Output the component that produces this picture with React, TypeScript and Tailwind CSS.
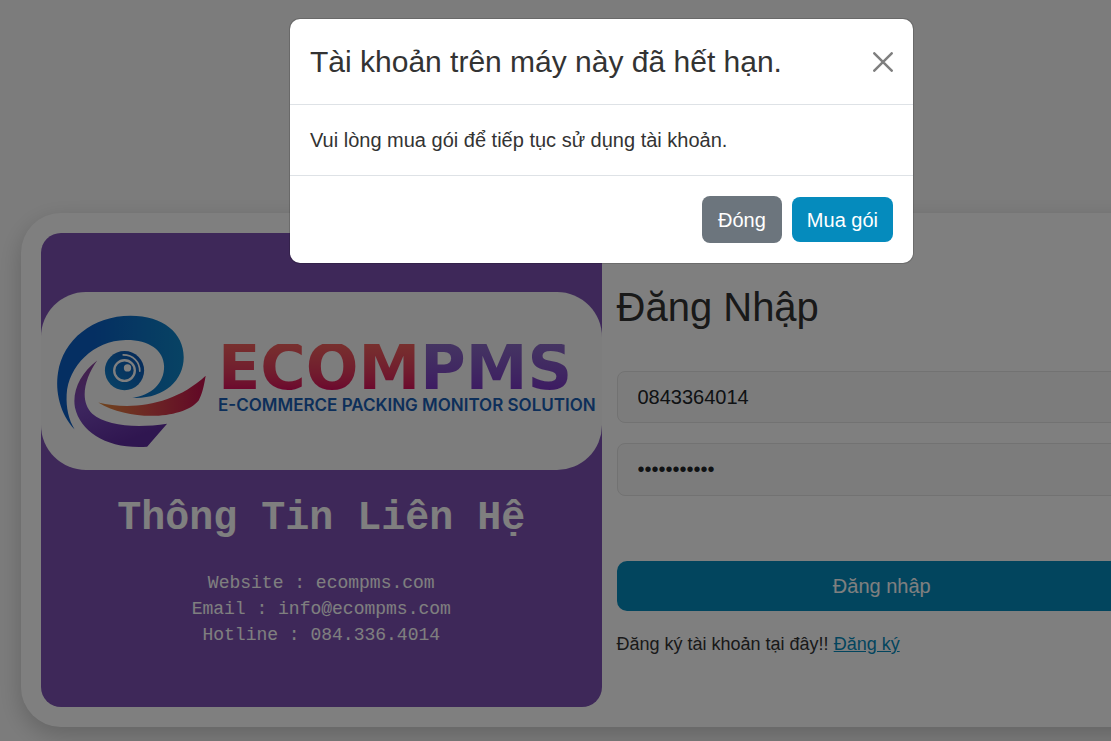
import { useState } from "react"

const contacts = [
  "Website : ecompms.com",
  "Email : info@ecompms.com",
  "Hotline : 084.336.4014",
]

function EyeLogo() {
  return (
    <svg viewBox="45 65 460 410" className="w-[153px] shrink-0" aria-hidden="true">
      <defs>
        <linearGradient id="lid" x1="0" y1="0" x2="1" y2="0">
          <stop offset="0.3" stopColor="#0a5fc4" />
          <stop offset="1" stopColor="#0f86c8" />
        </linearGradient>
        <linearGradient id="swoosh" x1="0" y1="0" x2="1" y2="0">
          <stop offset="0" stopColor="#e08a3c" />
          <stop offset="0.5" stopColor="#d94a4a" />
          <stop offset="1" stopColor="#c20f4c" />
        </linearGradient>
        <linearGradient id="base" x1="0" y1="0" x2="0.4" y2="1">
          <stop offset="0" stopColor="#8a3f90" />
          <stop offset="0.5" stopColor="#7a4bbd" />
          <stop offset="1" stopColor="#5f2ca0" />
        </linearGradient>
        <linearGradient id="iris" x1="0" y1="1" x2="1" y2="0">
          <stop offset="0" stopColor="#1288d0" />
          <stop offset="1" stopColor="#0a4fb0" />
        </linearGradient>
      </defs>
      <path
        fill="url(#lid)"
        d="M104 415C60 370 45 300 54 245C68 145 160 73 272 73C370 73 432 125 432 198C432 270 370 325 277 320C335 313 374 275 373 225C372 175 325 145 258 146C160 148 85 225 80 310C78 350 86 385 104 415Z"
      />
      <path
        fill="url(#base)"
        d="M172 208C122 245 96 300 105 349C122 425 205 475 322 467L382 398C290 412 200 405 157 368C118 330 133 262 172 208Z"
      />
      <path
        fill="url(#swoosh)"
        d="M175 334C270 358 400 345 498 254C493 285 487 310 477 328C430 385 270 392 175 334Z"
      />
      <circle cx="254" cy="238" r="59" fill="url(#iris)" />
      <circle cx="254" cy="238" r="31" fill="none" stroke="#fff" strokeWidth="7" />
      <circle cx="263" cy="230" r="11" fill="#fff" />
      <path d="M250 191C280 191 300 212 300 240" fill="none" stroke="#fff" strokeWidth="5" strokeLinecap="round" />
    </svg>
  )
}

function ContactPanel() {
  return (
    <div className="w-1/2 rounded-[20px] bg-[#7c51b3] pt-[59px] text-center font-['Liberation_Mono',monospace] text-white">
      <div className="flex h-[178px] items-center gap-[10px] rounded-[45px] bg-[#fafafa] pl-[14px] text-left">
        <EyeLogo />
        <div className="whitespace-nowrap">
          <div className="flex font-['DejaVu_Sans',sans-serif] text-[62px] leading-[48px] font-bold">
            <span className="bg-linear-to-b from-[#f0605c] to-[#d8005c] bg-clip-text text-transparent">ECOM</span>
            <span className="bg-linear-to-b from-[#8a6ac4] to-[#7a34c4] bg-clip-text text-transparent">PMS</span>
          </div>
          <div className="font-[Inter,sans-serif] text-[17px] leading-[26px] font-semibold text-[#1a5fb4]">
            E-COMMERCE PACKING MONITOR SOLUTION
          </div>
        </div>
      </div>
      <h2 className="mt-6 text-[40px] leading-[50px] font-bold">Thông Tin Liên Hệ</h2>
      <div className="mt-[26px] text-[18px] leading-[26px]">
        {contacts.map((line) => (
          <p key={line}>{line}</p>
        ))}
      </div>
    </div>
  )
}

function LoginForm() {
  const field =
    "block w-full rounded-lg border border-[#e4e4e4] bg-[#f8f8f8] px-5 text-[20px] text-[#212529]"

  return (
    <form className="w-1/2 px-[15px] pt-[49px]" onSubmit={(e) => e.preventDefault()}>
      <h1 className="text-[40px] leading-[50px] text-[#333]">Đăng Nhập</h1>
      <input className={`${field} mt-[39px] h-[52px]`} type="text" aria-label="Số điện thoại" defaultValue="0843364014" />
      <input className={`${field} mt-5 h-[53px]`} type="password" aria-label="Mật khẩu" defaultValue="ecompms1234" />
      <button type="submit" className="mt-[65px] h-[50px] w-full rounded-[10px] bg-[#058bbd] text-[20px] text-white">
        Đăng nhập
      </button>
      <p className="mt-5 text-[18px] leading-[26px] text-[#333]">
        Đăng ký tài khoản tại đây!!{" "}
        <a href="#register" className="text-[#058bbd] underline">
          Đăng ký
        </a>
      </p>
    </form>
  )
}

function ExpiredModal({ onClose }: { onClose: () => void }) {
  return (
    <div className="absolute inset-0 bg-black/50 pt-[19px]">
      <div
        role="dialog"
        aria-modal="true"
        aria-labelledby="expired-title"
        className="mx-auto w-[623px] rounded-[10px] bg-white text-[#333] ring-1 ring-black/15"
      >
        <div className="flex items-center justify-between border-b border-[#dee2e6] p-5">
          <h5 id="expired-title" className="text-[30px] leading-[45px]">
            Tài khoản trên máy này đã hết hạn.
          </h5>
          <button type="button" aria-label="Close" onClick={onClose}>
            <svg viewBox="0 0 20 20" className="size-5" fill="none" stroke="#7f7f7f" strokeWidth="2.5" strokeLinecap="round">
              <path d="M1.3 1.3 18.7 18.7M18.7 1.3 1.3 18.7" />
            </svg>
          </button>
        </div>
        <p className="p-5 text-[20px] leading-[30px]">Vui lòng mua gói để tiếp tục sử dụng tài khoản.</p>
        <div className="flex items-center justify-end gap-[10px] border-t border-[#dee2e6] p-5 text-[20px] text-white">
          <button type="button" className="h-[47px] rounded-lg bg-[#6c757d] px-4" onClick={onClose}>
            Đóng
          </button>
          <button type="button" className="h-[45px] rounded-lg bg-[#058bbd] px-[15px]">
            Mua gói
          </button>
        </div>
      </div>
    </div>
  )
}

export default function App() {
  const [open, setOpen] = useState(true)

  return (
    <div className="overflow-hidden">
      <div className="relative min-h-screen min-w-[1203px] bg-[#f9f9f9] px-[21px] pt-[213px] font-['Liberation_Sans',Arial,sans-serif]">
        <main className="flex min-h-[514px] rounded-[40px] bg-white p-5 shadow-[0_8px_24px_rgba(0,0,0,0.2)]">
          <ContactPanel />
          <LoginForm />
        </main>
        {open && <ExpiredModal onClose={() => setOpen(false)} />}
      </div>
    </div>
  )
}
